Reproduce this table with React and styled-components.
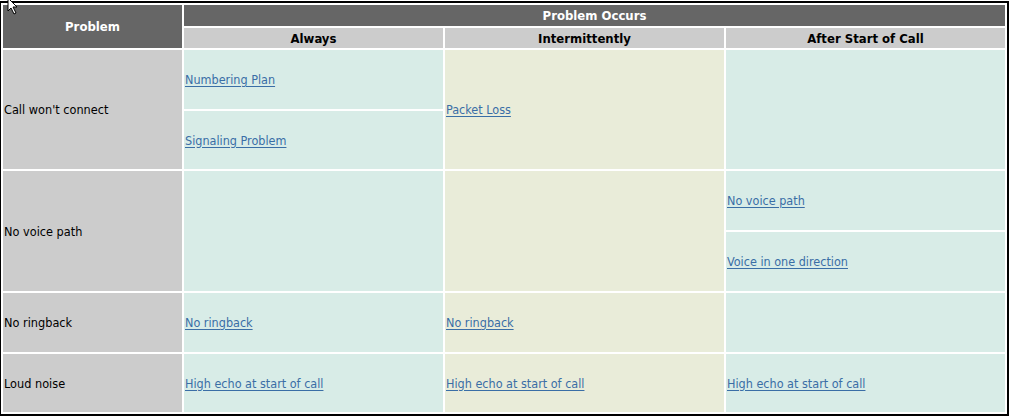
import React from "react";
import styled, { createGlobalStyle } from "styled-components";

const GlobalStyle = createGlobalStyle`
  html, body {
    margin: 0;
    padding: 0;
    background: #ffffff;
  }
  body {
    font-family: Tahoma, "DejaVu Sans Condensed", "Liberation Sans", sans-serif;
  }
`;

const Page = styled.div`
  position: relative;
  width: 1010px;
  height: 417px;
  overflow: hidden;
  background: #ffffff;
`;

const Grid = styled.table`
  margin: 1px 0 0 -1px;
  border: 2px solid #000;
  border-collapse: separate;
  border-spacing: 2px;
  table-layout: fixed;
  font-size: 12.5px;
  col.problem { width: 179px; }
  col.always { width: 259px; }
  col.mid { width: 279px; }
  col.after { width: 279px; }
`;

const TopHead = styled.th`
  background: #666666;
  color: #ffffff;
  font-weight: bold;
  font-size: 13px;
  text-align: center;
  vertical-align: middle;
  padding: 0;
  height: ${(p) => (p.$big ? "auto" : "21px")};
`;

const SubHead = styled.th`
  background: #cccccc;
  color: #000000;
  font-weight: bold;
  font-size: 13px;
  text-align: center;
  vertical-align: middle;
  padding: 0;
  height: 20px;
`;

const Label = styled.td`
  background: #cccccc;
  color: #000;
  font-size: 12.6px;
  padding: 0 1px;
  vertical-align: middle;
`;

const Cell = styled.td`
  background: ${(p) => (p.$tone === "olive" ? "#e9ecd9" : "#d8ece7")};
  padding: 0 1px;
  vertical-align: middle;
  height: ${(p) => p.$h || "auto"};
`;

const Link = styled.a`
  color: #3a6ea6;
  text-decoration: underline;
  text-underline-offset: 2px;
  cursor: pointer;
`;

const Pointer = styled.svg`
  position: absolute;
  left: 7px;
  top: -3px;
`;

const H = "59px";

export default function App() {
  return (
    <Page>
      <GlobalStyle />
      <Grid>
        <colgroup>
          <col className="problem" />
          <col className="always" />
          <col className="mid" />
          <col className="after" />
        </colgroup>
        <thead>
          <tr>
            <TopHead rowSpan={2} $big>Problem</TopHead>
            <TopHead colSpan={3}>Problem Occurs</TopHead>
          </tr>
          <tr>
            <SubHead>Always</SubHead>
            <SubHead>Intermittently</SubHead>
            <SubHead>After Start of Call</SubHead>
          </tr>
        </thead>
        <tbody>
          <tr>
            <Label rowSpan={2}>Call won't connect</Label>
            <Cell $h={H}><Link>Numbering Plan</Link></Cell>
            <Cell rowSpan={2} $tone="olive"><Link>Packet Loss</Link></Cell>
            <Cell rowSpan={2} />
          </tr>
          <tr>
            <Cell $h="58px"><Link>Signaling Problem</Link></Cell>
          </tr>
          <tr>
            <Label rowSpan={2}>No voice path</Label>
            <Cell rowSpan={2} />
            <Cell rowSpan={2} $tone="olive" />
            <Cell $h={H}><Link>No voice path</Link></Cell>
          </tr>
          <tr>
            <Cell $h={H}><Link>Voice in one direction</Link></Cell>
          </tr>
          <tr>
            <Label>No ringback</Label>
            <Cell $h={H}><Link>No ringback</Link></Cell>
            <Cell $tone="olive"><Link>No ringback</Link></Cell>
            <Cell />
          </tr>
          <tr>
            <Label>Loud noise</Label>
            <Cell $h="58px"><Link>High echo at start of call</Link></Cell>
            <Cell $tone="olive"><Link>High echo at start of call</Link></Cell>
            <Cell><Link>High echo at start of call</Link></Cell>
          </tr>
        </tbody>
      </Grid>
      <Pointer width="14" height="18" viewBox="0 0 14 18">
        <path d="M1 1 L1 14 L4 11 L7 17 L9 16 L6 10 L10 10 Z" fill="#ffffff" stroke="#000" strokeWidth="1" />
      </Pointer>
    </Page>
  );
}
